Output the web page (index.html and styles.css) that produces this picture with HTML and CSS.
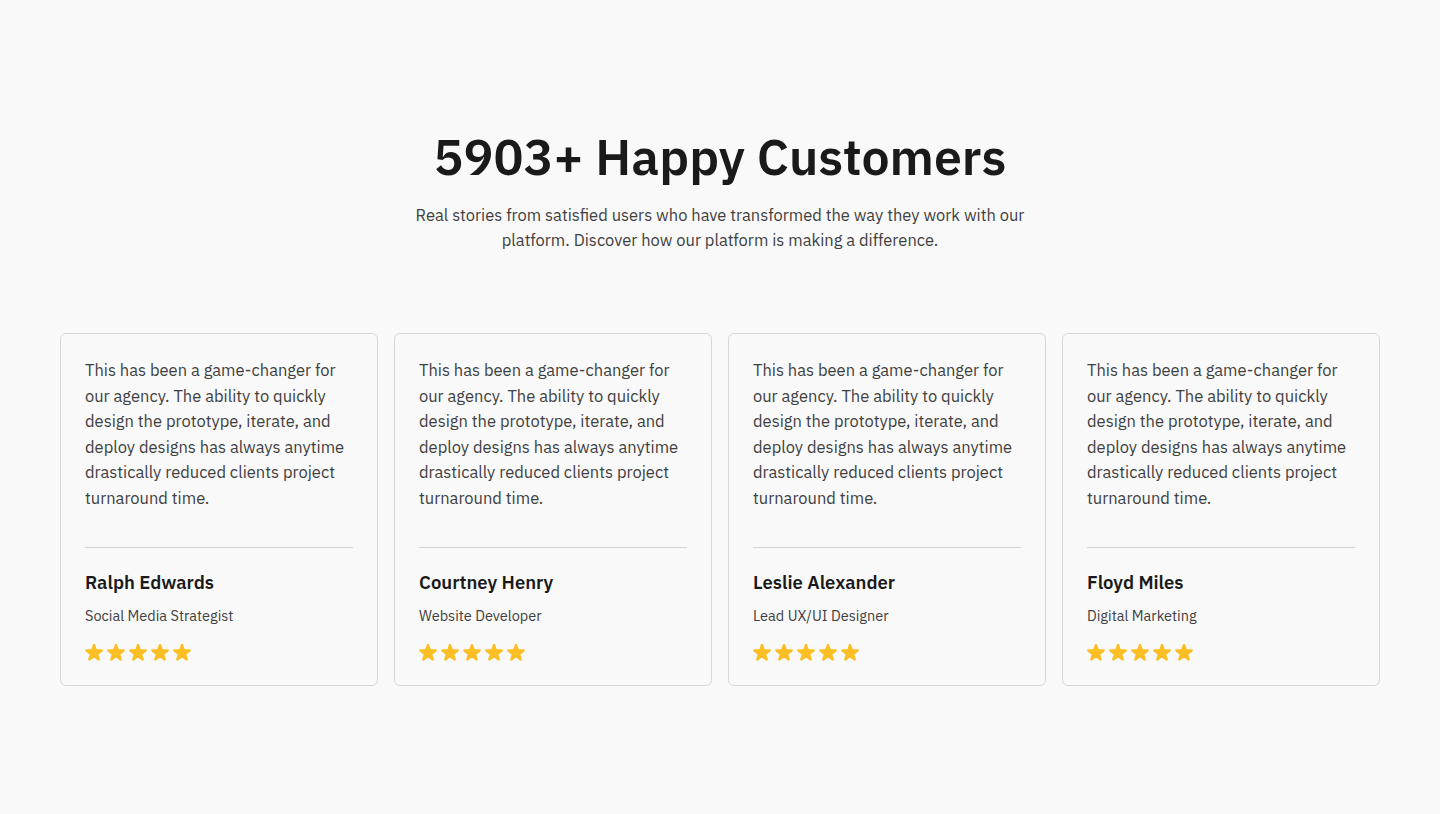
FILE: index.html
```html
<!DOCTYPE html>
<html lang="en">
<head>
<meta charset="utf-8">
<title>Testimonials</title>
<link rel="stylesheet" href="styles.css">
</head>
<body>
<section class="section">
  <header class="intro">
    <h1 class="title">5903+ Happy Customers</h1>
    <p class="lead">Real stories from satisfied users who have transformed the way they work with our platform. Discover how our platform is making a difference.</p>
  </header>
  <div class="grid">
    <article class="card">
      <p class="quote">This has been a game-changer for our agency. The ability to quickly design the prototype, iterate, and deploy designs has always anytime drastically reduced clients project turnaround time.</p>
      <div class="author">
        <h3 class="name">Ralph Edwards</h3>
        <p class="role">Social Media Strategist</p>
        <div class="stars">
          <svg viewBox="2.4 2.4 15.2 15.2"><path d="M9.049 2.927c.3-.921 1.603-.921 1.902 0l1.07 3.292a1 1 0 00.95.69h3.462c.969 0 1.371 1.24.588 1.81l-2.8 2.034a1 1 0 00-.364 1.118l1.07 3.292c.3.921-.755 1.688-1.54 1.118l-2.8-2.034a1 1 0 00-1.175 0l-2.8 2.034c-.784.57-1.838-.197-1.539-1.118l1.07-3.292a1 1 0 00-.364-1.118L2.98 8.72c-.783-.57-.38-1.81.588-1.81h3.461a1 1 0 00.951-.69l1.07-3.292z"/></svg>
          <svg viewBox="2.4 2.4 15.2 15.2"><path d="M9.049 2.927c.3-.921 1.603-.921 1.902 0l1.07 3.292a1 1 0 00.95.69h3.462c.969 0 1.371 1.24.588 1.81l-2.8 2.034a1 1 0 00-.364 1.118l1.07 3.292c.3.921-.755 1.688-1.54 1.118l-2.8-2.034a1 1 0 00-1.175 0l-2.8 2.034c-.784.57-1.838-.197-1.539-1.118l1.070-3.292a1 1 0 00-.364-1.118L2.98 8.72c-.783-.57-.38-1.810.588-1.81h3.461a1 1 0 00.951-.69l1.07-3.292z"/></svg>
          <svg viewBox="2.4 2.4 15.2 15.2"><path d="M9.049 2.927c.3-.921 1.603-.921 1.902 0l1.07 3.292a1 1 0 00.95.69h3.462c.969 0 1.371 1.24.588 1.81l-2.8 2.034a1 1 0 00-.364 1.118l1.07 3.292c.3.921-.755 1.688-1.54 1.118l-2.8-2.034a1 1 0 00-1.175 0l-2.8 2.034c-.784.57-1.838-.197-1.539-1.118l1.07-3.292a1 1 0 00-.364-1.118L2.98 8.72c-.783-.57-.38-1.81.588-1.81h3.461a1 1 0 00.951-.69l1.07-3.292z"/></svg>
          <svg viewBox="2.4 2.4 15.2 15.2"><path d="M9.049 2.927c.3-.921 1.603-.921 1.902 0l1.07 3.292a1 1 0 00.95.69h3.462c.969 0 1.371 1.24.588 1.81l-2.8 2.034a1 1 0 00-.364 1.118l1.07 3.292c.3.921-.755 1.688-1.54 1.118l-2.8-2.034a1 1 0 00-1.175 0l-2.8 2.034c-.784.57-1.838-.197-1.539-1.118l1.07-3.292a1 1 0 00-.364-1.118L2.98 8.72c-.783-.57-.38-1.81.588-1.81h3.461a1 1 0 00.951-.69l1.07-3.292z"/></svg>
          <svg viewBox="2.4 2.4 15.2 15.2"><path d="M9.049 2.927c.3-.921 1.603-.921 1.902 0l1.07 3.292a1 1 0 00.95.69h3.462c.969 0 1.371 1.24.588 1.81l-2.8 2.034a1 1 0 00-.364 1.118l1.07 3.292c.3.921-.755 1.688-1.54 1.118l-2.8-2.034a1 1 0 00-1.175 0l-2.8 2.034c-.784.57-1.838-.197-1.539-1.118l1.07-3.292a1 1 0 00-.364-1.118L2.98 8.72c-.783-.57-.38-1.81.588-1.81h3.461a1 1 0 00.951-.69l1.07-3.292z"/></svg>
        </div>
      </div>
    </article>
    <article class="card">
      <p class="quote">This has been a game-changer for our agency. The ability to quickly design the prototype, iterate, and deploy designs has always anytime drastically reduced clients project turnaround time.</p>
      <div class="author">
        <h3 class="name">Courtney Henry</h3>
        <p class="role">Website Developer</p>
        <div class="stars">
          <svg viewBox="2.4 2.4 15.2 15.2"><path d="M9.049 2.927c.3-.921 1.603-.921 1.902 0l1.07 3.292a1 1 0 00.95.69h3.462c.969 0 1.371 1.24.588 1.81l-2.8 2.034a1 1 0 00-.364 1.118l1.07 3.292c.3.921-.755 1.688-1.54 1.118l-2.8-2.034a1 1 0 00-1.175 0l-2.8 2.034c-.784.57-1.838-.197-1.539-1.118l1.07-3.292a1 1 0 00-.364-1.118L2.98 8.72c-.783-.57-.38-1.81.588-1.81h3.461a1 1 0 00.951-.69l1.07-3.292z"/></svg>
          <svg viewBox="2.4 2.4 15.2 15.2"><path d="M9.049 2.927c.3-.921 1.603-.921 1.902 0l1.07 3.292a1 1 0 00.95.69h3.462c.969 0 1.371 1.24.588 1.81l-2.8 2.034a1 1 0 00-.364 1.118l1.07 3.292c.3.921-.755 1.688-1.54 1.118l-2.8-2.034a1 1 0 00-1.175 0l-2.8 2.034c-.784.57-1.838-.197-1.539-1.118l1.07-3.292a1 1 0 00-.364-1.118L2.98 8.72c-.783-.57-.38-1.81.588-1.81h3.461a1 1 0 00.951-.69l1.07-3.292z"/></svg>
          <svg viewBox="2.4 2.4 15.2 15.2"><path d="M9.049 2.927c.3-.921 1.603-.921 1.902 0l1.07 3.292a1 1 0 00.95.69h3.462c.969 0 1.371 1.24.588 1.81l-2.8 2.034a1 1 0 00-.364 1.118l1.07 3.292c.3.921-.755 1.688-1.54 1.118l-2.8-2.034a1 1 0 00-1.175 0l-2.8 2.034c-.784.57-1.838-.197-1.539-1.118l1.07-3.292a1 1 0 00-.364-1.118L2.98 8.72c-.783-.57-.38-1.81.588-1.81h3.461a1 1 0 00.951-.69l1.07-3.292z"/></svg>
          <svg viewBox="2.4 2.4 15.2 15.2"><path d="M9.049 2.927c.3-.921 1.603-.921 1.902 0l1.07 3.292a1 1 0 00.95.69h3.462c.969 0 1.371 1.24.588 1.81l-2.8 2.034a1 1 0 00-.364 1.118l1.07 3.292c.3.921-.755 1.688-1.54 1.118l-2.8-2.034a1 1 0 00-1.175 0l-2.8 2.034c-.784.57-1.838-.197-1.539-1.118l1.07-3.292a1 1 0 00-.364-1.118L2.98 8.72c-.783-.57-.38-1.81.588-1.81h3.461a1 1 0 00.951-.69l1.07-3.292z"/></svg>
          <svg viewBox="2.4 2.4 15.2 15.2"><path d="M9.049 2.927c.3-.921 1.603-.921 1.902 0l1.07 3.292a1 1 0 00.95.69h3.462c.969 0 1.371 1.24.588 1.81l-2.8 2.034a1 1 0 00-.364 1.118l1.07 3.292c.3.921-.755 1.688-1.54 1.118l-2.8-2.034a1 1 0 00-1.175 0l-2.8 2.034c-.784.57-1.838-.197-1.539-1.118l1.07-3.292a1 1 0 00-.364-1.118L2.98 8.72c-.783-.57-.38-1.81.588-1.81h3.461a1 1 0 00.951-.69l1.07-3.292z"/></svg>
        </div>
      </div>
    </article>
    <article class="card">
      <p class="quote">This has been a game-changer for our agency. The ability to quickly design the prototype, iterate, and deploy designs has always anytime drastically reduced clients project turnaround time.</p>
      <div class="author">
        <h3 class="name">Leslie Alexander</h3>
        <p class="role">Lead UX/UI Designer</p>
        <div class="stars">
          <svg viewBox="2.4 2.4 15.2 15.2"><path d="M9.049 2.927c.3-.921 1.603-.921 1.902 0l1.07 3.292a1 1 0 00.95.69h3.462c.969 0 1.371 1.24.588 1.81l-2.8 2.034a1 1 0 00-.364 1.118l1.07 3.292c.3.921-.755 1.688-1.54 1.118l-2.8-2.034a1 1 0 00-1.175 0l-2.8 2.034c-.784.57-1.838-.197-1.539-1.118l1.07-3.292a1 1 0 00-.364-1.118L2.98 8.72c-.783-.57-.38-1.81.588-1.81h3.461a1 1 0 00.951-.69l1.07-3.292z"/></svg>
          <svg viewBox="2.4 2.4 15.2 15.2"><path d="M9.049 2.927c.3-.921 1.603-.921 1.902 0l1.07 3.292a1 1 0 00.95.69h3.462c.969 0 1.371 1.24.588 1.81l-2.8 2.034a1 1 0 00-.364 1.118l1.07 3.292c.3.921-.755 1.688-1.54 1.118l-2.8-2.034a1 1 0 00-1.175 0l-2.8 2.034c-.784.57-1.838-.197-1.539-1.118l1.07-3.292a1 1 0 00-.364-1.118L2.98 8.72c-.783-.57-.38-1.81.588-1.81h3.461a1 1 0 00.951-.69l1.07-3.292z"/></svg>
          <svg viewBox="2.4 2.4 15.2 15.2"><path d="M9.049 2.927c.3-.921 1.603-.921 1.902 0l1.07 3.292a1 1 0 00.95.69h3.462c.969 0 1.371 1.24.588 1.81l-2.8 2.034a1 1 0 00-.364 1.118l1.07 3.292c.3.921-.755 1.688-1.54 1.118l-2.8-2.034a1 1 0 00-1.175 0l-2.8 2.034c-.784.57-1.838-.197-1.539-1.118l1.07-3.292a1 1 0 00-.364-1.118L2.98 8.72c-.783-.57-.38-1.81.588-1.81h3.461a1 1 0 00.951-.69l1.07-3.292z"/></svg>
          <svg viewBox="2.4 2.4 15.2 15.2"><path d="M9.049 2.927c.3-.921 1.603-.921 1.902 0l1.07 3.292a1 1 0 00.95.69h3.462c.969 0 1.371 1.24.588 1.81l-2.8 2.034a1 1 0 00-.364 1.118l1.07 3.292c.3.921-.755 1.688-1.54 1.118l-2.8-2.034a1 1 0 00-1.175 0l-2.8 2.034c-.784.57-1.838-.197-1.539-1.118l1.07-3.292a1 1 0 00-.364-1.118L2.98 8.72c-.783-.57-.38-1.81.588-1.81h3.461a1 1 0 00.951-.69l1.07-3.292z"/></svg>
          <svg viewBox="2.4 2.4 15.2 15.2"><path d="M9.049 2.927c.3-.921 1.603-.921 1.902 0l1.07 3.292a1 1 0 00.95.69h3.462c.969 0 1.371 1.24.588 1.81l-2.8 2.034a1 1 0 00-.364 1.118l1.07 3.292c.3.921-.755 1.688-1.54 1.118l-2.8-2.034a1 1 0 00-1.175 0l-2.8 2.034c-.784.57-1.838-.197-1.539-1.118l1.07-3.292a1 1 0 00-.364-1.118L2.98 8.72c-.783-.57-.38-1.81.588-1.81h3.461a1 1 0 00.951-.69l1.07-3.292z"/></svg>
        </div>
      </div>
    </article>
    <article class="card">
      <p class="quote">This has been a game-changer for our agency. The ability to quickly design the prototype, iterate, and deploy designs has always anytime drastically reduced clients project turnaround time.</p>
      <div class="author">
        <h3 class="name">Floyd Miles</h3>
        <p class="role">Digital Marketing</p>
        <div class="stars">
          <svg viewBox="2.4 2.4 15.2 15.2"><path d="M9.049 2.927c.3-.921 1.603-.921 1.902 0l1.07 3.292a1 1 0 00.95.69h3.462c.969 0 1.371 1.24.588 1.81l-2.8 2.034a1 1 0 00-.364 1.118l1.07 3.292c.3.921-.755 1.688-1.54 1.118l-2.8-2.034a1 1 0 00-1.175 0l-2.8 2.034c-.784.57-1.838-.197-1.539-1.118l1.07-3.292a1 1 0 00-.364-1.118L2.98 8.72c-.783-.57-.38-1.81.588-1.81h3.461a1 1 0 00.951-.69l1.07-3.292z"/></svg>
          <svg viewBox="2.4 2.4 15.2 15.2"><path d="M9.049 2.927c.3-.921 1.603-.921 1.902 0l1.07 3.292a1 1 0 00.95.69h3.462c.969 0 1.371 1.24.588 1.81l-2.8 2.034a1 1 0 00-.364 1.118l1.07 3.292c.3.921-.755 1.688-1.54 1.118l-2.8-2.034a1 1 0 00-1.175 0l-2.8 2.034c-.784.57-1.838-.197-1.539-1.118l1.07-3.292a1 1 0 00-.364-1.118L2.98 8.72c-.783-.57-.38-1.81.588-1.81h3.461a1 1 0 00.951-.69l1.07-3.292z"/></svg>
          <svg viewBox="2.4 2.4 15.2 15.2"><path d="M9.049 2.927c.3-.921 1.603-.921 1.902 0l1.07 3.292a1 1 0 00.95.69h3.462c.969 0 1.371 1.24.588 1.81l-2.8 2.034a1 1 0 00-.364 1.118l1.07 3.292c.3.921-.755 1.688-1.54 1.118l-2.8-2.034a1 1 0 00-1.175 0l-2.8 2.034c-.784.57-1.838-.197-1.539-1.118l1.07-3.292a1 1 0 00-.364-1.118L2.98 8.72c-.783-.57-.38-1.81.588-1.81h3.461a1 1 0 00.951-.69l1.07-3.292z"/></svg>
          <svg viewBox="2.4 2.4 15.2 15.2"><path d="M9.049 2.927c.3-.921 1.603-.921 1.902 0l1.07 3.292a1 1 0 00.95.69h3.462c.969 0 1.371 1.24.588 1.81l-2.8 2.034a1 1 0 00-.364 1.118l1.07 3.292c.3.921-.755 1.688-1.54 1.118l-2.8-2.034a1 1 0 00-1.175 0l-2.8 2.034c-.784.57-1.838-.197-1.539-1.118l1.07-3.292a1 1 0 00-.364-1.118L2.98 8.72c-.783-.57-.38-1.81.588-1.81h3.461a1 1 0 00.951-.69l1.07-3.292z"/></svg>
          <svg viewBox="2.4 2.4 15.2 15.2"><path d="M9.049 2.927c.3-.921 1.603-.921 1.902 0l1.07 3.292a1 1 0 00.95.69h3.462c.969 0 1.371 1.24.588 1.81l-2.8 2.034a1 1 0 00-.364 1.118l1.07 3.292c.3.921-.755 1.688-1.54 1.118l-2.8-2.034a1 1 0 00-1.175 0l-2.8 2.034c-.784.57-1.838-.197-1.539-1.118l1.07-3.292a1 1 0 00-.364-1.118L2.98 8.72c-.783-.57-.38-1.81.588-1.81h3.461a1 1 0 00.951-.69l1.07-3.292z"/></svg>
        </div>
      </div>
    </article>
  </div>
</section>
</body>
</html>
```

FILE: styles.css
```css
* { box-sizing: border-box; }
html, body {
  margin: 0;
  padding: 0;
  background: #f9f9f9;
  font-family: "IBM Plex Sans", Roboto, "Liberation Sans", sans-serif;
  color: #1c1c1c;
}
.section {
  padding: 122px 60px 80px;
  min-height: 814px;
}
.intro {
  display: flex;
  flex-direction: column;
  align-items: center;
  text-align: center;
}
.title {
  margin: 0;
  font-size: 50px;
  line-height: 70px;
  font-weight: 600;
  color: #1a1a1a;
}
.lead {
  margin: 11px 0 0;
  max-width: 640px;
  font-size: 16.5px;
  line-height: 25px;
  color: #404040;
}
.grid {
  margin-top: 80px;
  display: grid;
  grid-template-columns: repeat(4, 1fr);
  gap: 16px;
}
.card {
  border: 1px solid #d6d6d6;
  border-radius: 6px;
  background: #f9f9f9;
  padding: 24px 24px 23px;
  display: flex;
  flex-direction: column;
}
.quote {
  margin: 0;
  font-size: 16.5px;
  line-height: 25.6px;
  color: #404040;
  padding-bottom: 35px;
  border-bottom: 1px solid #d4d4d4;
}
.author {
  padding-top: 21px;
}
.name {
  margin: 0;
  font-size: 18.5px;
  line-height: 26px;
  font-weight: 600;
  color: #1a1a1a;
}
.role {
  margin: 11px 0 0;
  font-size: 14.5px;
  line-height: 20px;
  color: #404040;
}
.stars {
  margin-top: 18px;
  display: flex;
  gap: 4px;
}
.stars svg {
  width: 18px;
  height: 18px;
  fill: #fbbf24;
}
```
